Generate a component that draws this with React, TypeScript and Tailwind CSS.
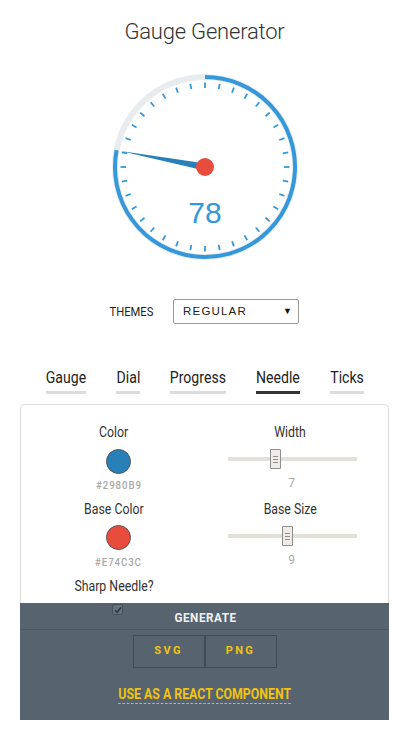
import React from "react";

const VALUE = 78;

function Gauge() {
  const cx = 100;
  const cy = 100;
  const r = 90;
  const deg = (VALUE / 100) * 360;
  const rad = (deg * Math.PI) / 180;
  const s = Math.sin(rad);
  const c = Math.cos(rad);
  const ex = cx + r * s;
  const ey = cy - r * c;
  const ticks = Array.from({ length: 36 }, (_, i) => {
    const a = (i * 10 * Math.PI) / 180;
    return {
      x1: cx + 79 * Math.sin(a),
      y1: cy - 79 * Math.cos(a),
      x2: cx + 84.5 * Math.sin(a),
      y2: cy - 84.5 * Math.cos(a),
    };
  });
  const tipR = 86;
  const tx = cx + tipR * s;
  const ty = cy - tipR * c;
  const hw = 3.5;
  const b1x = cx + hw * c;
  const b1y = cy + hw * s;
  const b2x = cx - hw * c;
  const b2y = cy - hw * s;
  return (
    <svg width="200" height="200" viewBox="0 0 200 200" className="block">
      <circle cx={cx} cy={cy} r={r} fill="none" stroke="#e8ecee" strokeWidth="6" />
      <path
        d={`M ${cx} ${cy - r} A ${r} ${r} 0 1 1 ${ex} ${ey}`}
        fill="none"
        stroke="#3498db"
        strokeWidth="4"
      />
      {ticks.map((t, i) => (
        <line key={i} x1={t.x1} y1={t.y1} x2={t.x2} y2={t.y2} stroke="#3498db" strokeWidth="1.8" />
      ))}
      <polygon points={`${tx},${ty} ${b1x},${b1y} ${b2x},${b2y}`} fill="#2980b9" />
      <circle cx={cx} cy={cy} r="9" fill="#e74c3c" />
      <text
        x={cx}
        y={cy + 56}
        textAnchor="middle"
        fill="#3498db"
        fontSize="30"
        fontFamily="'Liberation Sans', Arial, sans-serif"
      >
        {VALUE}
      </text>
    </svg>
  );
}

function Label({ text, className }: { text: string; className?: string }) {
  return (
    <div className={`h-[18px] leading-[18px] text-[14px] text-[#333] whitespace-nowrap scale-x-[0.88] ${className ?? ""}`}>
      {text}
    </div>
  );
}

function Slider({ pos, value }: { pos: number; value: string }) {
  return (
    <>
      <div className="relative mt-[8px] h-[20px] w-[129px] ml-[4px] flex items-center">
        <div className="h-[4px] w-full bg-[#e3dfd9]" />
        <div
          className="absolute top-0 h-[20px] w-[11px] bg-[#efece8] border border-[#8d8d8d] rounded-[1px] flex flex-col items-center justify-center gap-[2px]"
          style={{ left: pos }}
        >
          <div className="h-px w-[5px] bg-[#8d8d8d]" />
          <div className="h-px w-[5px] bg-[#8d8d8d]" />
          <div className="h-px w-[5px] bg-[#8d8d8d]" />
        </div>
      </div>
      <div className="h-[14px] leading-[14px] mt-[7px] text-[12px] text-[#aaa] ml-[2px]">{value}</div>
    </>
  );
}

export default function App() {
  const tabs = [
    { label: "Gauge", w: "w-[40px]", active: false },
    { label: "Dial", w: "w-[24px]", active: false },
    { label: "Progress", w: "w-[56px]", active: false },
    { label: "Needle", w: "w-[44px]", active: true },
    { label: "Ticks", w: "w-[34px]", active: false },
  ];
  return (
    <div className="w-[409px] min-h-[731px] bg-white flex flex-col items-center font-['Roboto',sans-serif] text-[#333]">
      <div className="pt-[19px] h-[45px] text-[22px] leading-[26px] font-light text-[#333] tracking-[-0.2px]">
        Gauge Generator
      </div>
      <div className="mt-[22px] ml-[1px] h-[200px]">
        <Gauge />
      </div>
      <div className="mt-[32px] h-[25px] flex items-center gap-[20px]">
        <span className="w-[43px] flex justify-center">
          <span className="block text-[13px] text-[#222] scale-x-[0.86] whitespace-nowrap">THEMES</span>
        </span>
        <div className="w-[126px] h-[25px] border border-[#999] rounded-[2px] bg-white flex items-center justify-between pl-[9px] pr-[6px]">
          <span className="text-[11.5px] tracking-[1.2px] text-[#222] font-['Liberation_Sans',sans-serif]">REGULAR</span>
          <span className="text-[9px] text-[#111]">▼</span>
        </div>
      </div>
      <div className="mt-[44px] flex gap-[30px] ml-[1px]">
        {tabs.map((t) => (
          <div key={t.label} className={`${t.w} flex flex-col items-center`}>
            <div className="h-[20px] leading-[20px] text-[16px] text-[#222] whitespace-nowrap scale-x-[0.88]">
              {t.label}
            </div>
            <div className={`mt-[3px] h-[3px] w-full ${t.active ? "bg-[#333]" : "bg-[#ddd]"}`} />
          </div>
        ))}
      </div>
      <div className="mt-[10px] w-[369px]">
        <div className="h-[199px] border border-b-0 border-[#ddd] rounded-t-[5px] bg-white pl-[4px] grid grid-cols-[177px_177px]">
          <div className="flex flex-col items-center pt-[18px]">
            <Label text="Color" />
            <div className="mt-[8px] ml-[10px] w-[25px] h-[25px] rounded-full bg-[#2980b9] border border-[#555]" />
            <div className="mt-[5px] ml-[10px] h-[14px] leading-[14px] text-[10.5px] font-medium tracking-[1px] text-[#a9a9a9] scale-x-[0.92]">#2980B9</div>
            <Label text="Base Color" className="mt-[7px]" />
            <div className="mt-[7px] ml-[10px] w-[25px] h-[25px] rounded-full bg-[#e74c3c] border border-[#555]" />
            <div className="mt-[6px] ml-[10px] h-[14px] leading-[14px] text-[10.5px] font-medium tracking-[1px] text-[#a9a9a9] scale-x-[0.92]">#E74C3C</div>
            <Label text="Sharp Needle?" className="mt-[7px]" />
          </div>
          <div className="flex flex-col items-center pt-[18px]">
            <Label text="Width" />
            <Slider pos={42} value="7" />
            <Label text="Base Size" className="mt-[10px]" />
            <Slider pos={54} value="9" />
          </div>
        </div>
        <div className="relative h-[117px] bg-[#57636f] flex flex-col items-center">
          <div className="absolute left-[92px] top-[1px] w-[11px] h-[11px] rounded-[2px] border border-[#45505b] bg-[#66727d] flex items-center justify-center">
            <svg width="8" height="8" viewBox="0 0 8 8">
              <path d="M1 4.2 L3 6.2 L7 1.5" fill="none" stroke="#2e3740" strokeWidth="1.6" />
            </svg>
          </div>
          <div className="w-full h-[27px] pt-[4px] border-b border-[#4c5864] flex items-center justify-center">
            <span className="block text-[13px] font-bold tracking-[0.6px] text-[#eef1f3] ml-[2px] scale-x-[0.9]">GENERATE</span>
          </div>
          <div className="mt-[5px] flex">
            <div className="w-[72px] h-[33px] border border-[#3f4b57] flex items-center justify-center text-[11px] font-bold tracking-[2.4px] text-[#f1c40f]">
              SVG
            </div>
            <div className="w-[72px] h-[33px] border border-[#3f4b57] flex items-center justify-center text-[11px] font-bold tracking-[2.4px] text-[#f1c40f]">
              PNG
            </div>
          </div>
          <div className="mt-[19px] scale-x-[0.85] leading-[16px] text-[14.5px] font-bold text-[#f1c40f] border-b border-dashed border-[#f1c40f] whitespace-nowrap">
            USE AS A REACT COMPONENT
          </div>
        </div>
      </div>
    </div>
  );
}
